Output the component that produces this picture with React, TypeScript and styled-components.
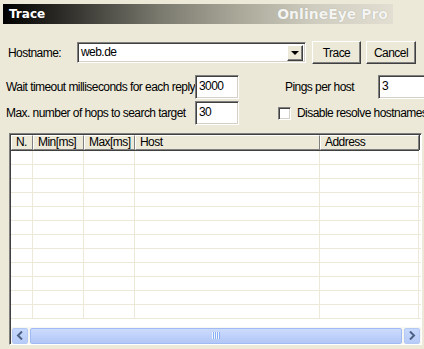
import React from 'react';
import styled, { createGlobalStyle } from 'styled-components';

const GlobalStyle = createGlobalStyle`
  html, body {
    margin: 0;
    padding: 0;
    background: #ece9d8;
  }
  * {
    box-sizing: border-box;
  }
`;

const uiFont = `"Liberation Sans", Arial, sans-serif`;

const Window = styled.div`
  width: 424px;
  height: 349px;
  overflow: hidden;
  background: #ece9d8;
  font-family: ${uiFont};
  font-size: 12px;
  letter-spacing: -0.55px;
  color: #000;
  padding-top: 4px;
`;

const TitleBar = styled.div`
  display: flex;
  align-items: center;
  justify-content: space-between;
  width: 390px;
  height: 20px;
  margin-left: 3px;
  padding: 0 5px 0 6px;
  letter-spacing: 0;
  background: linear-gradient(
    to right,
    #000000 0%,
    #3b3a35 20%,
    #7a796e 40%,
    #a9a798 60%,
    #cfcdbf 80%,
    #e2dfd2 100%
  );
`;

const TitleText = styled.span`
  font-family: "DejaVu Sans", "Liberation Sans", sans-serif;
  font-weight: bold;
  font-size: 12px;
  color: #fff;
`;

const Brand = styled.span`
  font-family: "DejaVu Sans", "Liberation Sans", sans-serif;
  font-weight: bold;
  font-size: 14px;
  color: #f4f4f2;
  text-shadow: 0 0 1px #a09e90;
`;

const Row = styled.div<{ $top: number; $left: number; $height: number }>`
  display: flex;
  align-items: center;
  margin-top: ${(p) => p.$top}px;
  padding-left: ${(p) => p.$left}px;
  height: ${(p) => p.$height}px;
`;

const Label = styled.span<{ $width?: number; $gap?: number }>`
  flex: none;
  width: ${(p) => (p.$width ? `${p.$width}px` : 'auto')};
  margin-left: ${(p) => p.$gap ?? 0}px;
  white-space: nowrap;
`;

const sunken = `
  background: #fff;
  border-top: 1px solid #808080;
  border-left: 1px solid #808080;
  border-bottom: 1px solid #fff;
  border-right: 1px solid #fff;
  box-shadow: inset 1px 1px 0 #404040, inset -1px -1px 0 #d4d0c8;
`;

const raised = `
  background: #ece9d8;
  border-top: 1px solid #fff;
  border-left: 1px solid #fff;
  border-bottom: 1px solid #404040;
  border-right: 1px solid #404040;
  box-shadow: inset -1px -1px 0 #808080;
`;

const Field = styled.div<{ $width: number; $height: number; $gap?: number }>`
  ${sunken}
  flex: none;
  display: flex;
  align-items: center;
  width: ${(p) => p.$width}px;
  height: ${(p) => p.$height}px;
  margin-left: ${(p) => p.$gap ?? 0}px;
  padding-left: 3px;
  padding-right: 2px;
`;

const FieldText = styled.span`
  flex: 1;
  white-space: nowrap;
  margin-bottom: 2px;
`;

const DropButton = styled.div`
  ${raised}
  width: 16px;
  height: 16px;
  display: flex;
  align-items: center;
  justify-content: center;
`;

const Arrow = styled.span`
  width: 0;
  height: 0;
  border-left: 4px solid transparent;
  border-right: 4px solid transparent;
  border-top: 4px solid #000;
  margin-top: 1px;
`;

const Button = styled.div<{ $width: number; $gap: number }>`
  ${raised}
  flex: none;
  display: flex;
  align-items: center;
  justify-content: center;
  width: ${(p) => p.$width}px;
  height: 23px;
  margin-left: ${(p) => p.$gap}px;
`;

const CheckBox = styled.div`
  ${sunken}
  flex: none;
  width: 13px;
  height: 13px;
  margin-left: 39px;
  margin-right: 6px;
`;

const Table = styled.div`
  margin: 8px 0 0 9px;
  width: 413px;
  height: 212px;
  display: flex;
  flex-direction: column;
  background: #fff;
  border-top: 1px solid #808080;
  border-left: 1px solid #808080;
  border-right: 1px solid #fff;
  border-bottom: 1px solid #fff;
  box-shadow: inset 1px 1px 0 #404040;
  padding: 1px 0 0 1px;
  overflow: hidden;
`;

const HeaderRow = styled.div`
  display: flex;
  height: 15px;
  flex: none;
`;

const HeaderCell = styled.div<{ $width: number }>`
  flex: none;
  width: ${(p) => p.$width}px;
  height: 15px;
  background: #ece9d8;
  border-top: 1px solid #fff;
  border-left: 1px solid #fff;
  border-right: 1px solid #808080;
  border-bottom: 1px solid #808080;
  box-shadow: 1px 0 0 #404040, 0 1px 0 #404040;
  padding-left: 4px;
  line-height: 13px;
  white-space: nowrap;
  overflow: hidden;
`;

const Body = styled.div`
  flex: 1;
  margin-top: 1px;
  overflow: hidden;
`;

const BodyRow = styled.div`
  display: flex;
  height: 14px;
  border-bottom: 1px solid #ece9d8;
`;

const BodyCell = styled.div<{ $width: number }>`
  flex: none;
  width: ${(p) => p.$width}px;
  border-right: 1px solid #ece9d8;
`;

const ScrollBar = styled.div`
  flex: none;
  display: flex;
  align-items: center;
  height: 17px;
  padding: 0 1px;
  background: #f7f6f0;
  gap: 1px;
`;

const ScrollButton = styled.div`
  flex: none;
  width: 16px;
  height: 16px;
  border: 1px solid #b4c8f6;
  border-radius: 2px;
  background: linear-gradient(to bottom, #c8d9fd, #b6cbf8);
  display: flex;
  align-items: center;
  justify-content: center;
`;

const Thumb = styled.div`
  flex: 1;
  height: 16px;
  margin: 0 1px;
  border: 1px solid #a0bbf4;
  border-radius: 2px;
  background: linear-gradient(to bottom, #cddcfd, #bccffa 60%, #b3c7f5);
  display: flex;
  align-items: center;
  justify-content: center;
`;

const Grip = styled.div`
  width: 8px;
  height: 7px;
  background: repeating-linear-gradient(
    to right,
    #eef4fe 0px,
    #eef4fe 1px,
    #8cb0f8 1px,
    #8cb0f8 2px
  );
`;

const columns = [
  { title: 'N.', width: 22 },
  { title: 'Min[ms]', width: 51 },
  { title: 'Max[ms]', width: 51 },
  { title: 'Host', width: 185 },
  { title: 'Address', width: 99 },
];

const Chevron = ({ dir }: { dir: 'left' | 'right' }) => (
  <svg width="8" height="9" viewBox="0 0 8 9">
    <path
      d={dir === 'left' ? 'M6 0.5 L2 4.5 L6 8.5' : 'M2 0.5 L6 4.5 L2 8.5'}
      fill="none"
      stroke="#4d6185"
      strokeWidth="2"
    />
  </svg>
);

export default function App() {
  const rows = Array.from({ length: 12 });
  return (
    <Window>
      <GlobalStyle />
      <TitleBar>
        <TitleText>Trace</TitleText>
        <Brand>OnlineEye Pro</Brand>
      </TitleBar>

      <Row $top={17} $left={8} $height={23}>
        <Label $width={69}>Hostname:</Label>
        <Field $width={229} $height={21}>
          <FieldText>web.de</FieldText>
          <DropButton>
            <Arrow />
          </DropButton>
        </Field>
        <Button $width={49} $gap={6}>Trace</Button>
        <Button $width={50} $gap={5}>Cancel</Button>
      </Row>

      <Row $top={11} $left={6} $height={24}>
        <Label $width={189}>Wait timeout milliseconds for each reply</Label>
        <Field $width={44} $height={24}>
          <FieldText>3000</FieldText>
        </Field>
        <Label $width={93} $gap={46}>Pings per host</Label>
        <Field $width={50} $height={24}>
          <FieldText>3</FieldText>
        </Field>
      </Row>

      <Row $top={2} $left={6} $height={24}>
        <Label $width={189}>Max. number of hops to search target</Label>
        <Field $width={44} $height={24}>
          <FieldText>30</FieldText>
        </Field>
        <CheckBox />
        <Label>Disable resolve hostnames</Label>
      </Row>

      <Table>
        <HeaderRow>
          {columns.map((c) => (
            <HeaderCell key={c.title} $width={c.width}>
              {c.title}
            </HeaderCell>
          ))}
        </HeaderRow>
        <Body>
          {rows.map((_, i) => (
            <BodyRow key={i}>
              {columns.map((c) => (
                <BodyCell key={c.title} $width={c.width} />
              ))}
            </BodyRow>
          ))}
        </Body>
        <ScrollBar>
          <ScrollButton>
            <Chevron dir="left" />
          </ScrollButton>
          <Thumb>
            <Grip />
          </Thumb>
          <ScrollButton>
            <Chevron dir="right" />
          </ScrollButton>
        </ScrollBar>
      </Table>
    </Window>
  );
}
